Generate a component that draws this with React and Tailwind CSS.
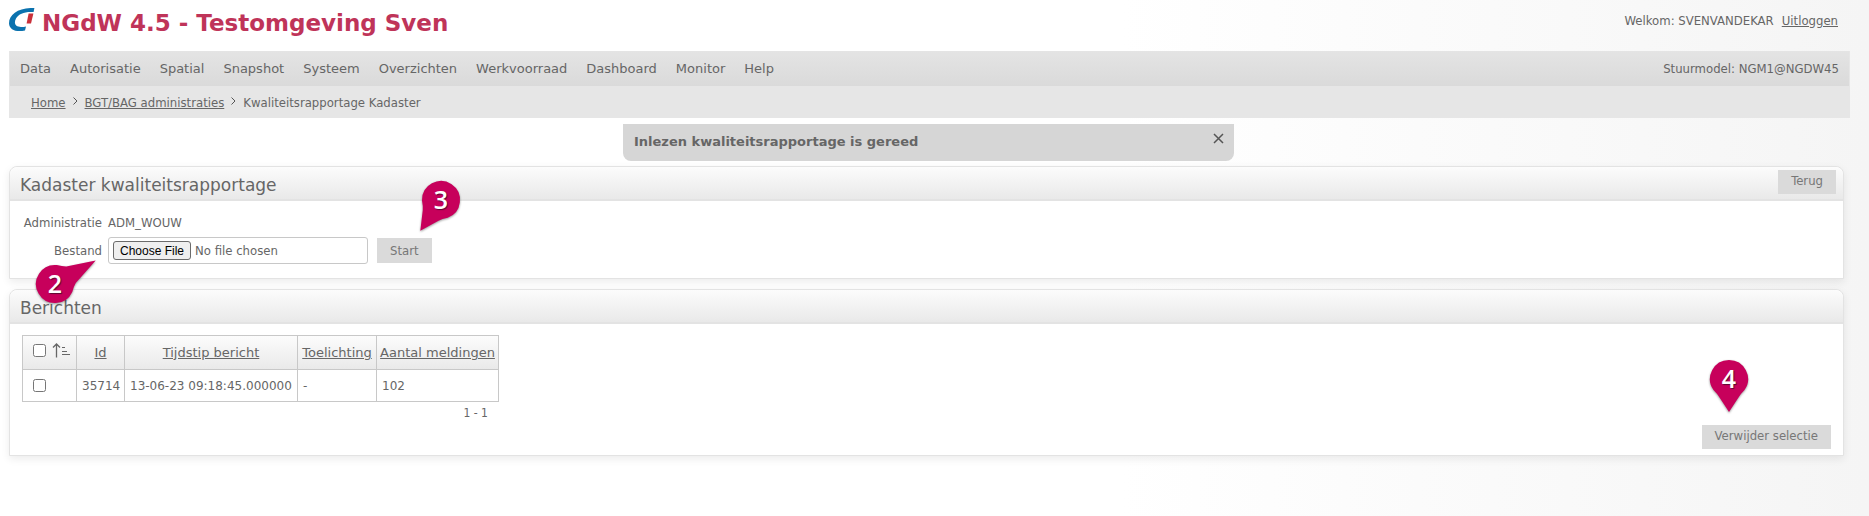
import { useState } from "react";

const menuItems = [
  "Data",
  "Autorisatie",
  "Spatial",
  "Snapshot",
  "Systeem",
  "Overzichten",
  "Werkvoorraad",
  "Dashboard",
  "Monitor",
  "Help",
];

const berichten = [
  { id: 35714, tijdstip: "13-06-23 09:18:45.000000", toelichting: "-", meldingen: 102 },
];

const buttonClass =
  "bg-[#dadada] text-[#777] font-['DejaVu_Sans_Condensed'] text-[13px] leading-[16px] px-[13px]";

function Logo() {
  return (
    <svg className="w-[26px] h-6" viewBox="0 0 26 24" aria-hidden="true">
      <path
        d="M25.4 0 L24.6 4 C15.6 3.4 9.8 5.6 7 10.5 C4.4 15.4 6.6 19 12 19 C14 19 15.8 18.8 17 18.4 L16 22.4 C7 24.4 0.4 21.6 0 15.4 C0 6 10 -0.6 25.4 0 Z"
        fill="#0b72ae"
      />
      <path d="M19.6 5.4 H24.4 L22 15.4 H17.6 Z" fill="#c9303a" />
    </svg>
  );
}

function Marker({ number, angle, tail, className }) {
  return (
    <div className={`absolute z-10 size-[38px] pointer-events-none ${className}`}>
      <svg
        className="absolute inset-0 overflow-visible drop-shadow-[0_1px_1px_rgba(0,0,0,0.4)]"
        width="38"
        height="38"
        viewBox="-19 -19 38 38"
        aria-hidden="true"
      >
        <path
          d={`M0 -19 A19 19 0 0 1 15.5 11 Q11.5 15 9.5 18.5 L0 ${tail} L-9.5 18.5 Q-11.5 15 -15.5 11 A19 19 0 0 1 0 -19 Z`}
          transform={`rotate(${angle})`}
          fill="#c7005b"
        />
      </svg>
      <span className="relative flex size-full items-center justify-center pb-[2px] font-['Open_Sans'] text-[25px] leading-none font-semibold text-white [text-shadow:1px_1px_1px_#5a0a30]">
        {number}
      </span>
    </div>
  );
}

function Panel({ title, action, children }) {
  return (
    <section className="relative mr-[6px] rounded-t-lg border border-[#e3e3e3] bg-white shadow-[0_3px_8px_rgba(0,0,0,0.08)]">
      <header className="flex h-[34px] items-start justify-between rounded-t-lg border-b-2 border-[#e3e3e3] bg-linear-to-b from-[#fcfcfc] to-[#e9e9e9] pl-[10px] pr-[7px]">
        <h2 className="pt-[6px] text-[17px] leading-6">{title}</h2>
        {action}
      </header>
      {children}
    </section>
  );
}

export default function App() {
  const [showMessage, setShowMessage] = useState(true);
  const [selected, setSelected] = useState([]);

  const allSelected = selected.length === berichten.length;

  const toggleAll = () => {
    setSelected(allSelected ? [] : berichten.map((b) => b.id));
  };

  const toggle = (id) => {
    setSelected(selected.includes(id) ? selected.filter((s) => s !== id) : [...selected, id]);
  };

  return (
    <div className="min-h-screen bg-linear-to-r from-white from-60% to-[#f5f5f5] pl-[9px] pr-[19px] font-['DejaVu_Sans',Verdana,sans-serif] text-[#666]">
      <header className="flex h-[51px] items-start justify-between pt-2">
        <div className="flex items-start gap-[7px]">
          <Logo />
          <h1 className="text-[23px] leading-[30px] font-bold text-[#bf3459]">
            NGdW 4.5 - Testomgeving Sven
          </h1>
        </div>
        <div className="flex gap-2 pr-3 pt-1 font-['DejaVu_Sans_Condensed'] text-[13px] leading-[18px]">
          <span>Welkom: SVENVANDEKAR</span>
          <a href="#uitloggen" className="underline">Uitloggen</a>
        </div>
      </header>

      <nav className="flex h-[35px] items-center justify-between border-x border-[#e6e6e6] bg-linear-to-b from-[#e4e4e4] to-[#dadada] px-[10px] text-[13px]">
        <ul className="flex gap-[19px]">
          {menuItems.map((item) => (
            <li key={item}>
              <a href={`#${item.toLowerCase()}`}>{item}</a>
            </li>
          ))}
        </ul>
        <span className="font-['DejaVu_Sans_Condensed']">Stuurmodel: NGM1@NGDW45</span>
      </nav>

      <nav
        aria-label="Kruimelpad"
        className="flex h-8 items-center gap-[7px] bg-[#e6e6e6] pl-[22px] pt-[2px] font-['DejaVu_Sans_Condensed'] text-[13px]"
      >
        <a href="#home" className="underline">Home</a>
        <Chevron />
        <a href="#administraties" className="underline">BGT/BAG administraties</a>
        <Chevron />
        <span>Kwaliteitsrapportage Kadaster</span>
      </nav>

      <div className="h-12 pt-[6px] pr-[2px]">
        {showMessage && (
          <div
            role="status"
            className="mx-auto flex h-[37px] w-[611px] items-start justify-between rounded-b-lg bg-[#d6d6d6] pl-[11px] pr-[10px]"
          >
            <strong className="pt-[9px] text-[13px] leading-[18px]">
              Inlezen kwaliteitsrapportage is gereed
            </strong>
            <button
              type="button"
              aria-label="Sluiten"
              className="mt-[9px]"
              onClick={() => setShowMessage(false)}
            >
              <svg width="11" height="11" viewBox="0 0 11 11" stroke="#555" strokeWidth="1.5">
                <path d="M1 1 L10 10 M10 1 L1 10" />
              </svg>
            </button>
          </div>
        )}
      </div>

      <main className="flex flex-col gap-[10px]">
        <Panel
          title="Kadaster kwaliteitsrapportage"
          action={
            <button type="button" className={`${buttonClass} mt-[3px] h-6 pb-[3px]`}>
              Terug
            </button>
          }
        >
          <form
            className="flex h-[77px] flex-col gap-[5px] pt-[13px] font-['DejaVu_Sans_Condensed'] text-[13px]"
            onSubmit={(e) => e.preventDefault()}
          >
            <div className="flex gap-[6px] leading-[18px]">
              <span className="w-[92px] text-right">Administratie</span>
              <span>ADM_WOUW</span>
            </div>
            <div className="flex items-center gap-[6px]">
              <label htmlFor="bestand" className="w-[92px] text-right">Bestand</label>
              <input
                id="bestand"
                type="file"
                className="h-[27px] w-[260px] rounded-[3px] border border-[#c8c8c8] bg-white pl-1 pt-[3px] leading-[18px] file:mr-1 file:h-[19px] file:rounded-[3px] file:border file:border-[#6b6b6b] file:bg-[#efefef] file:px-[6px] file:font-['Liberation_Sans'] file:text-[12px] file:leading-[16px] file:text-black"
              />
              <button type="submit" className={`${buttonClass} ml-[3px] h-[25px]`}>
                Start
              </button>
            </div>
          </form>
          <Marker number={2} angle={-120} tail={47} className="left-[26px] top-[98px]" />
          <Marker number={3} angle={34} tail={37} className="left-[412px] top-[14px]" />
        </Panel>

        <Panel title="Berichten">
          <div className="h-[131px] pl-3 pt-[11px]">
            <div className="w-[477px]">
              <table className="w-full table-fixed border-collapse text-[12px] [&_td]:border [&_td]:border-[#c8c8c8] [&_td]:px-[5px] [&_th]:border [&_th]:border-[#c8c8c8] [&_th]:px-[3px] [&_th]:text-[13px] [&_th]:font-normal">
                <colgroup>
                  <col className="w-[54px]" />
                  <col className="w-[48px]" />
                  <col className="w-[173px]" />
                  <col className="w-[79px]" />
                  <col />
                </colgroup>
                <thead>
                  <tr className="h-[34px] bg-linear-to-b from-[#fcfcfc] to-[#e9e9e9]">
                    <th>
                      <div className="flex items-center gap-[6px] pl-[7px] pb-1">
                        <input
                          type="checkbox"
                          aria-label="Alles selecteren"
                          className="size-[13px]"
                          checked={allSelected}
                          onChange={toggleAll}
                        />
                        <SortIcon />
                      </div>
                    </th>
                    <th><a href="#id" className="underline">Id</a></th>
                    <th><a href="#tijdstip" className="underline">Tijdstip bericht</a></th>
                    <th><a href="#toelichting" className="underline">Toelichting</a></th>
                    <th><a href="#aantal" className="underline">Aantal meldingen</a></th>
                  </tr>
                </thead>
                <tbody>
                  {berichten.map((b) => (
                    <tr key={b.id} className="h-8">
                      <td>
                        <input
                          type="checkbox"
                          aria-label={`Selecteer ${b.id}`}
                          className="ml-[5px] block size-[13px]"
                          checked={selected.includes(b.id)}
                          onChange={() => toggle(b.id)}
                        />
                      </td>
                      <td>{b.id}</td>
                      <td>{b.tijdstip}</td>
                      <td>{b.toelichting}</td>
                      <td>{b.meldingen}</td>
                    </tr>
                  ))}
                </tbody>
              </table>
              <p className="pr-[11px] pt-[2px] text-right font-['DejaVu_Sans_Condensed'] text-[12px] leading-[18px]">
                1 - 1
              </p>
            </div>
            <div className="flex justify-end pr-3 pt-[3px]">
              <button type="button" className={`${buttonClass} h-6 pb-[3px]`}>
                Verwijder selectie
              </button>
            </div>
          </div>
          <Marker number={4} angle={0} tail={33} className="right-[95px] top-[70px]" />
        </Panel>
      </main>
    </div>
  );
}

function Chevron() {
  return (
    <svg className="mb-[5px]" width="5" height="8" viewBox="0 0 5 8" fill="none" stroke="#555">
      <path d="M0.5 0.5 L4 4 L0.5 7.5" />
    </svg>
  );
}

function SortIcon() {
  return (
    <svg width="18" height="15" viewBox="0 0 18 15" fill="none" stroke="#666">
      <path d="M4.5 14.5 V1.5 M1 4.5 L4.5 1 L8 4.5" strokeWidth="1.3" />
      <path d="M10 4.5 H13 M10 8.5 H15 M10 11.5 H18" />
    </svg>
  );
}
